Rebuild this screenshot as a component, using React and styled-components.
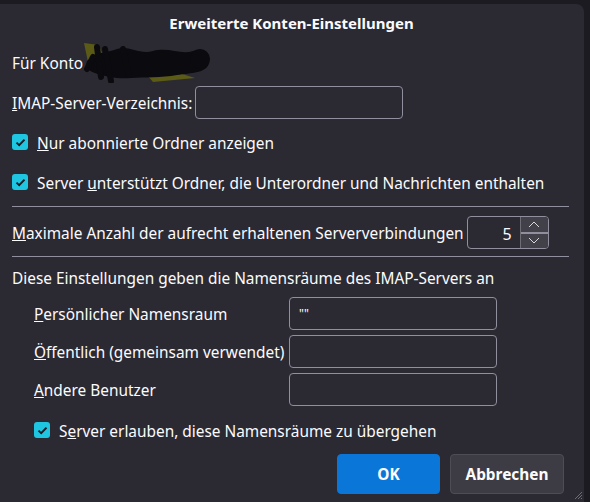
import React from "react";
import styled, { createGlobalStyle } from "styled-components";

const GlobalStyle = createGlobalStyle`
  body {
    margin: 0;
    background: #1c1b22;
    font-family: "Noto Sans", "Open Sans", sans-serif;
    color: #fbfbfe;
  }
`;

const Dialog = styled.div`
  position: relative;
  margin-top: 4px;
  width: 584px;
  height: 498px;
  box-sizing: border-box;
  background: #2b2a33;
  border-top-right-radius: 8px;
  padding: 0 15px 0 12px;
  display: flex;
  flex-direction: column;
  font-size: 15.4px;
`;

const Title = styled.h1`
  margin: 0;
  height: 38px;
  display: flex;
  align-items: center;
  justify-content: center;
  font-size: 15px;
  font-weight: 700;
  padding-left: 2px;
`;

const Row = styled.div`
  display: flex;
  align-items: center;
  height: ${(p) => p.$h || 40}px;
  padding-left: ${(p) => p.$indent || 0}px;
  gap: ${(p) => p.$gap || 0}px;
`;

const Label = styled.label`
  white-space: nowrap;
  flex-shrink: 0;
  padding-top: 2px;
`;

const TextInput = styled.div`
  box-sizing: border-box;
  width: ${(p) => p.$w || 208}px;
  height: 33px;
  border: 1px solid #8f8f9d;
  border-radius: 4px;
  background: #2b2a33;
  display: flex;
  align-items: center;
  padding-left: 9px;
  font-size: 12px;
`;

const Box = styled.span`
  width: 16px;
  height: 16px;
  border-radius: 3px;
  background: #1fc6e2;
  display: inline-flex;
  align-items: center;
  justify-content: center;
  flex-shrink: 0;
  margin-right: 9px;
`;

const Separator = styled.hr`
  margin: ${(p) => p.$m || "0"};
  border: 0;
  border-top: 1px solid #8f8f9d;
  width: 100%;
`;

const Spinner = styled.div`
  display: flex;
  box-sizing: border-box;
  width: 82px;
  height: 33px;
  margin-left: 3px;
  border: 1px solid #8f8f9d;
  border-radius: 4px;
  overflow: hidden;
`;

const SpinValue = styled.div`
  flex: 1;
  display: flex;
  align-items: center;
  justify-content: flex-end;
  padding: 2px 8px 0 0;
  font-size: 16px;
`;

const SpinButtons = styled.div`
  width: 27px;
  display: flex;
  flex-direction: column;
  border-left: 1px solid #6e6d75;
`;

const SpinButton = styled.div`
  flex: 1;
  background: #42414a;
  display: flex;
  align-items: center;
  justify-content: center;
  border-top: ${(p) => (p.$down ? "2px solid #8f8f9d" : "0")};
`;

const Namespaces = styled.div`
  display: grid;
  grid-template-columns: 255px 208px;
  grid-auto-rows: 33px;
  row-gap: 5px;
  padding-left: 22px;
  align-items: center;
`;

const Footer = styled.div`
  display: flex;
  justify-content: flex-end;
  gap: 10px;
  padding-right: 5px;
`;

const Button = styled.button`
  height: 40px;
  min-width: ${(p) => p.$w}px;
  border-radius: 4px;
  border: 1px solid ${(p) => (p.$primary ? "#0a76d8" : "#4e4d55")};
  background: ${(p) => (p.$primary ? "#0a76d8" : "#3d3c44")};
  color: #fbfbfe;
  font-family: inherit;
  font-size: 15.4px;
  font-weight: 700;
`;

const Grip = styled.svg`
  position: absolute;
  right: 1px;
  bottom: 2px;
`;

const Check = () => (
  <Box>
    <svg width="11" height="9" viewBox="0 0 11 9">
      <path d="M1.5 4.6 L4.2 7.2 L9.5 1.6" fill="none" stroke="#1c1b22" strokeWidth="2" />
    </svg>
  </Box>
);

const Chevron = ({ up }) => (
  <svg width="12" height="7" viewBox="0 0 12 7">
    <path
      d={up ? "M1 6 L6 1 L11 6" : "M1 1 L6 6 L11 1"}
      fill="none"
      stroke="#d8d8dd"
      strokeWidth="1"
    />
  </svg>
);

// scribbled-out account name
const Scribble = () => (
  <svg width="128" height="42" viewBox="0 0 128 42" style={{ marginLeft: 0, marginTop: 0 }}>
    <path d="M1 2 L16 4 L22 20 L6 26 Z" fill="#5b5a17" />
    <path d="M64 34 L96 32 L112 37 L70 41 Z" fill="#5b5a17" />
    <path
      d="M4 20 C14 10 24 12 34 8 C46 4 56 14 70 10 C86 6 98 14 110 10 C122 6 128 12 126 22 C124 32 108 32 94 34 C78 37 62 36 48 37 C36 38 22 36 12 32 C6 30 2 26 4 20 Z"
      fill="#0b0a0e"
    />
    <path d="M14 6 L18 36 M22 8 L28 40 M40 8 L46 34 M10 16 L4 28" stroke="#0b0a0e" strokeWidth="6" strokeLinecap="round" />
    <circle cx="117" cy="18" r="10" fill="#0b0a0e" />
  </svg>
);

const App = () => (
  <>
    <GlobalStyle />
    <Dialog>
      <Title>Erweiterte Konten-Einstellungen</Title>
      <Row>
        <Label>Für Konto</Label>
        <Scribble />
      </Row>
      <Row $gap={3}>
        <Label>
          <u>I</u>MAP-Server-Verzeichnis:
        </Label>
        <TextInput />
      </Row>
      <Row>
        <Check />
        <Label>
          <u>N</u>ur abonnierte Ordner anzeigen
        </Label>
      </Row>
      <Row>
        <Check />
        <Label>
          Server <u>u</u>nterstützt Ordner, die Unterordner und Nachrichten enthalten
        </Label>
      </Row>
      <Separator $m="4px 0 9px" />
      <Row $h={33}>
        <Label>
          <u>M</u>aximale Anzahl der aufrecht erhaltenen Serververbindungen
        </Label>
        <Spinner>
          <SpinValue>5</SpinValue>
          <SpinButtons>
            <SpinButton>
              <Chevron up />
            </SpinButton>
            <SpinButton $down>
              <Chevron />
            </SpinButton>
          </SpinButtons>
        </Spinner>
      </Row>
      <Separator $m="7px 0 0" />
      <Row $h={40}>
        <Label>Diese Einstellungen geben die Namensräume des IMAP-Servers an</Label>
      </Row>
      <Namespaces>
        <Label>
          <u>P</u>ersönlicher Namensraum
        </Label>
        <TextInput>""</TextInput>
        <Label>
          <u>Ö</u>ffentlich (gemeinsam verwendet)
        </Label>
        <TextInput />
        <Label>
          <u>A</u>ndere Benutzer
        </Label>
        <TextInput />
      </Namespaces>
      <Row $indent={22} $h={48}>
        <Check />
        <Label>
          S<u>e</u>rver erlauben, diese Namensräume zu übergehen
        </Label>
      </Row>
      <Footer>
        <Button $primary $w={103}>OK</Button>
        <Button $w={114}>Abbrechen</Button>
      </Footer>
      <Grip width="10" height="10" viewBox="0 0 10 10">
        <path d="M9 2 L2 9 M9 5 L5 9 M9 8 L8 9" stroke="#6e6d75" strokeWidth="1" />
      </Grip>
    </Dialog>
  </>
);

export default App;
